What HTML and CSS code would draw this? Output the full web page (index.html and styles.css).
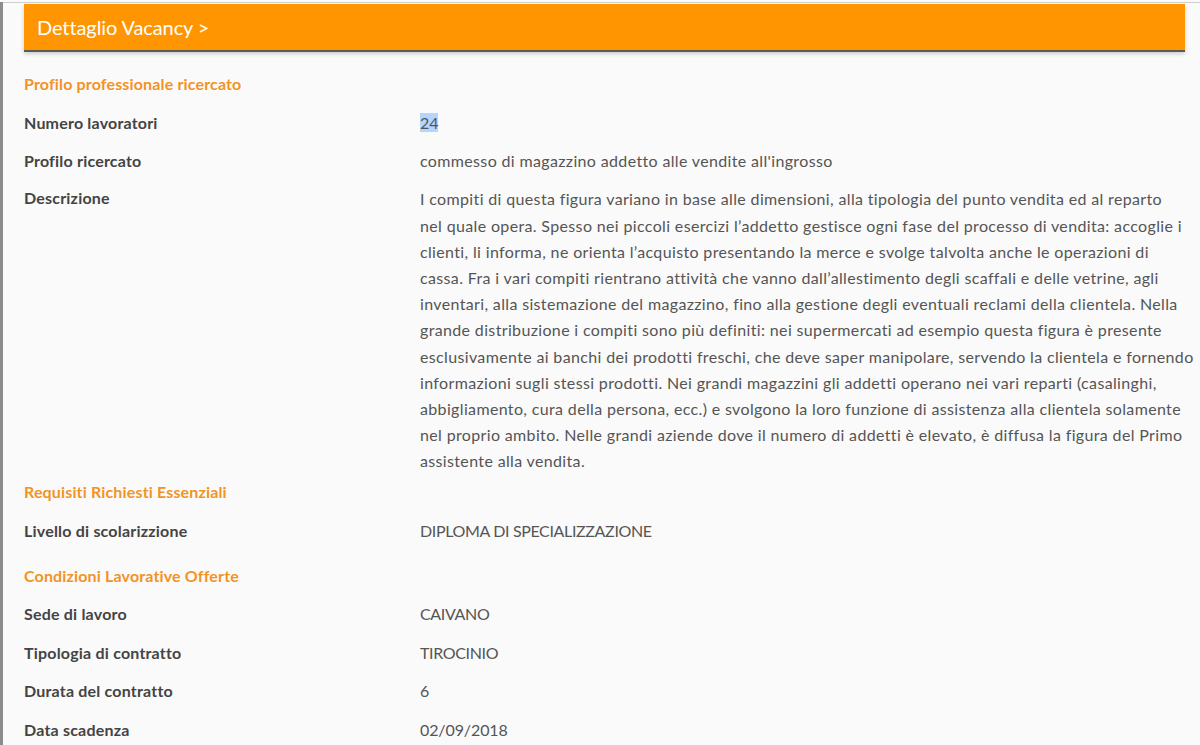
FILE: index.html
```html
<!DOCTYPE html>
<html lang="it">
<head>
<meta charset="utf-8">
<title>Dettaglio Vacancy</title>
<link rel="stylesheet" href="styles.css">
</head>
<body>
<div class="frame">
  <div class="page">
    <div class="banner">Dettaglio Vacancy &gt;</div>
    <div class="section first">Profilo professionale ricercato</div>
    <div class="row"><div class="label">Numero lavoratori</div><div class="value num"><span class="sel">24</span></div></div>
    <div class="row"><div class="label">Profilo ricercato</div><div class="value">commesso di magazzino addetto alle vendite all'ingrosso</div></div>
    <div class="row row-long"><div class="label">Descrizione</div><div class="value">I compiti di questa figura variano in base alle dimensioni, alla tipologia del punto vendita ed al reparto<br>
nel quale opera. Spesso nei piccoli esercizi l’addetto gestisce ogni fase del processo di vendita: accoglie i<br>
clienti, li informa, ne orienta l’acquisto presentando la merce e svolge talvolta anche le operazioni di<br>
cassa. Fra i vari compiti rientrano attività che vanno dall’allestimento degli scaffali e delle vetrine, agli<br>
inventari, alla sistemazione del magazzino, fino alla gestione degli eventuali reclami della clientela. Nella<br>
grande distribuzione i compiti sono più definiti: nei supermercati ad esempio questa figura è presente<br>
esclusivamente ai banchi dei prodotti freschi, che deve saper manipolare, servendo la clientela e fornendo<br>
informazioni sugli stessi prodotti. Nei grandi magazzini gli addetti operano nei vari reparti (casalinghi,<br>
abbigliamento, cura della persona, ecc.) e svolgono la loro funzione di assistenza alla clientela solamente<br>
nel proprio ambito. Nelle grandi aziende dove il numero di addetti è elevato, è diffusa la figura del Primo<br>
assistente alla vendita.</div></div>
    <div class="section">Requisiti Richiesti Essenziali</div>
    <div class="row"><div class="label">Livello di scolarizzione</div><div class="value caps">DIPLOMA DI SPECIALIZZAZIONE</div></div>
    <div class="section">Condizioni Lavorative Offerte</div>
    <div class="row"><div class="label">Sede di lavoro</div><div class="value caps">CAIVANO</div></div>
    <div class="row"><div class="label">Tipologia di contratto</div><div class="value caps">TIROCINIO</div></div>
    <div class="row"><div class="label">Durata del contratto</div><div class="value num">6</div></div>
    <div class="row"><div class="label">Data scadenza</div><div class="value num">02/09/2018</div></div>
  </div>
</div>
</body>
</html>
```
FILE: styles.css
```css
html, body {
  margin: 0;
  padding: 0;
  height: 100%;
  overflow: hidden;
}
body {
  background: #fafafa;
  font-family: "Lato", "Open Sans", sans-serif;
  font-size: 16px;
  color: #555;
}
.frame {
  border-left: 3px solid #8c8c8c;
  min-height: 100%;
  box-sizing: border-box;
}
.page {
  border-top: 1px solid #cfcfcf;
  margin-top: 2px;
  padding: 1px 15px 0 21px;
}
.banner {
  background: #ff9500;
  color: #fff;
  font-size: 20px;
  line-height: 46px;
  height: 46px;
  padding-left: 13px;
  border-bottom: 2px solid #5a5a5a;
  box-shadow: 0 2px 4px rgba(0,0,0,0.18);
  margin-bottom: 6.25px;
  letter-spacing: -0.1px;
}
.section {
  color: #f39325;
  font-weight: bold;
  line-height: 24px;
  padding: 13.75px 0 7.25px;
  letter-spacing: 0.15px;
}
.row {
  display: flex;
  line-height: 24px;
  padding: 7.25px 0;
}
.row-long {
  padding: 6.15px 0 0;
  margin-bottom: -8.35px;
}
.row-long .value {
  line-height: 26.2px;
}
.label {
  width: 396px;
  flex: none;
  font-weight: bold;
  color: #444;
  letter-spacing: 0.2px;
}
.value {
  flex: 1;
  color: #555;
  letter-spacing: 0.35px;
  white-space: nowrap;
}
.value.caps {
  letter-spacing: -0.35px;
}
.value.num {
  letter-spacing: -0.1px;
}
.sel {
  background: #b4d5fe;
}
```
